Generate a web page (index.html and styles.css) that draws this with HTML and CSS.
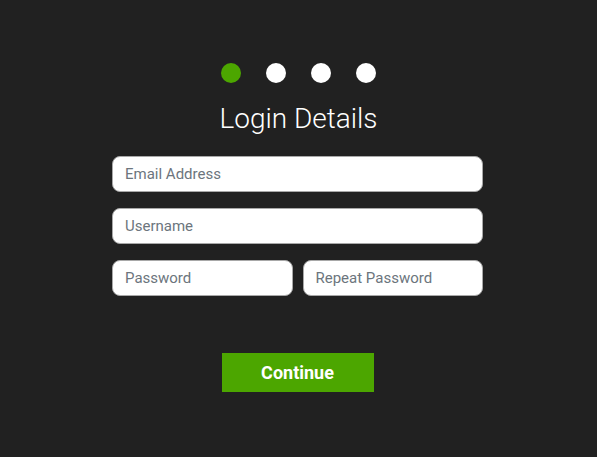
FILE: index.html
```html
<!DOCTYPE html>
<html>
<head>
<meta charset="utf-8">
<link rel="stylesheet" href="styles.css">
</head>
<body>
<div class="wizard">
  <div class="steps">
    <span class="dot active"></span>
    <span class="dot"></span>
    <span class="dot"></span>
    <span class="dot"></span>
  </div>
  <h1 class="title">Login Details</h1>
  <form class="form">
    <input class="field" type="email" placeholder="Email Address">
    <input class="field" type="text" placeholder="Username">
    <div class="row">
      <input class="field" type="password" placeholder="Password">
      <input class="field" type="password" placeholder="Repeat Password">
    </div>
    <button class="btn" type="button">Continue</button>
  </form>
</div>
</body>
</html>
```
FILE: styles.css
```css
html, body {
  margin: 0;
  padding: 0;
  background: #212121;
  height: 100%;
}
body {
  font-family: Roboto, "Liberation Sans", sans-serif;
}
.wizard {
  display: flex;
  flex-direction: column;
  align-items: center;
  padding-top: 63px;
  padding-right: 2px;
}
.steps {
  display: flex;
  gap: 25px;
  margin-left: 2px;
}
.dot {
  width: 20px;
  height: 20px;
  border-radius: 50%;
  background: #ffffff;
}
.dot.active {
  background: #4ca600;
}
.title {
  margin: 19px 0 0 2px;
  font-size: 28px;
  font-weight: 300;
  color: #ffffff;
  line-height: 34px;
}
.form {
  width: 371px;
  margin-top: 20px;
  display: flex;
  flex-direction: column;
  gap: 16px;
}
.row {
  display: flex;
  gap: 10px;
}
.row .field {
  flex: 1;
  min-width: 0;
}
.field {
  box-sizing: border-box;
  height: 36px;
  border: 1px solid #a8a8a8;
  border-radius: 8px;
  background: #ffffff;
  padding: 0 12px;
  font-family: Roboto, "Liberation Sans", sans-serif;
  font-size: 15px;
  color: #333;
  outline: none;
}
.field::placeholder {
  color: #6c757d;
}
.btn {
  align-self: center;
  margin-top: 41px;
  width: 152px;
  height: 39px;
  border: none;
  background: #4ca600;
  color: #ffffff;
  font-family: Roboto, "Liberation Sans", sans-serif;
  font-weight: 700;
  font-size: 18px;
  cursor: pointer;
}
```
